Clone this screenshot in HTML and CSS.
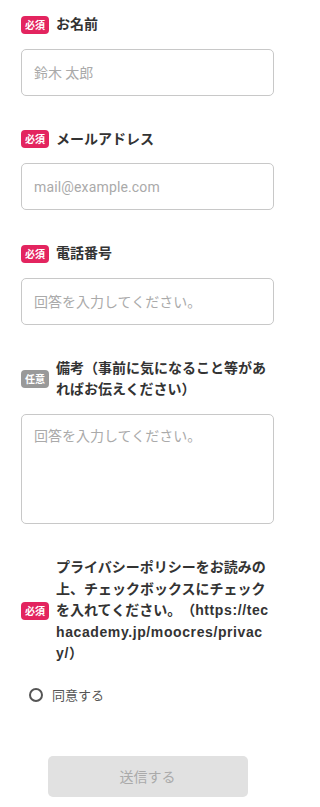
FILE: index.html
```html
<!DOCTYPE html>
<html lang="ja">
<head>
<meta charset="utf-8">
<title>Form</title>
<link rel="stylesheet" href="styles.css">
</head>
<body>
<form class="form">
  <div class="field">
    <div class="label-row">
      <span class="badge badge-req">必須</span>
      <span class="label">お名前</span>
    </div>
    <input class="input" type="text" placeholder="鈴木 太郎">
  </div>
  <div class="field">
    <div class="label-row">
      <span class="badge badge-req">必須</span>
      <span class="label">メールアドレス</span>
    </div>
    <input class="input input-latin" type="email" placeholder="mail@example.com">
  </div>
  <div class="field">
    <div class="label-row">
      <span class="badge badge-req">必須</span>
      <span class="label">電話番号</span>
    </div>
    <input class="input" type="tel" placeholder="回答を入力してください。">
  </div>
  <div class="field">
    <div class="label-row">
      <span class="badge badge-opt">任意</span>
      <span class="label">備考（事前に気になること等があればお伝えください）</span>
    </div>
    <textarea class="textarea" placeholder="回答を入力してください。"></textarea>
  </div>
  <div class="field field-privacy">
    <div class="label-row">
      <span class="badge badge-req">必須</span>
      <span class="label label-break">プライバシーポリシーをお読みの上、チェックボックスにチェックを入れてください。（<span class="url">https://techacademy.jp/moocres/privacy/</span>）</span>
    </div>
    <label class="radio-row">
      <input class="radio" type="radio" name="agree">
      <span class="radio-text">同意する</span>
    </label>
  </div>
  <div class="actions">
    <button class="submit" type="button" disabled>送信する</button>
  </div>
</form>
</body>
</html>
```
FILE: styles.css
```css
* { box-sizing: border-box; }
html, body { margin: 0; padding: 0; background: #fff; }
body {
  font-family: "Liberation Sans", "Noto Sans CJK JP", sans-serif;
  color: #333;
  width: 300px;
  text-spacing-trim: space-all;
}
.form {
  padding: 14px 26px 0 21px;
  display: flex;
  flex-direction: column;
}
.field { display: flex; flex-direction: column; }
.field + .field { margin-top: 33px; }
.label-row {
  display: flex;
  align-items: center;
  gap: 7px;
}
.badge {
  flex: none;
  width: 28px;
  height: 18px;
  border-radius: 4px;
  color: #fff;
  font-family: "Noto Sans CJK JP", sans-serif;
  font-size: 10px;
  font-weight: 700;
  line-height: 18px;
  text-align: center;
}
.badge-req { background: #e3245f; }
.badge-opt { background: #999; }
.label {
  flex: none;
  width: 214.5px;
  font-family: "Liberation Sans", "Noto Sans CJK JP", sans-serif;
  font-size: 14px;
  font-weight: 700;
  line-height: 21.6px;
  color: #333;
  text-spacing-trim: space-all;
}
.label-break { word-break: break-all; }
.url { letter-spacing: 0.6px; }
.input, .textarea {
  margin-top: 13px;
  width: 100%;
  border: 1px solid #c8c8c8;
  border-radius: 5px;
  font-family: "Noto Sans CJK JP", Roboto, sans-serif;
  font-size: 14px;
  color: #333;
  background: #fff;
  outline: none;
}
.input {
  height: 47px;
  padding: 0 12px;
}
.input-latin { font-family: Roboto, "Noto Sans CJK JP", sans-serif; letter-spacing: 0.15px; }
.textarea {
  height: 110px;
  padding: 10px 12px;
  resize: none;
  line-height: 20px;
  display: block;
}
.input::placeholder, .textarea::placeholder { color: #aaa; }
.radio-row {
  margin-top: 20px;
  margin-left: 8px;
  display: flex;
  align-items: center;
  gap: 9px;
  height: 20px;
}
.radio {
  appearance: none;
  -webkit-appearance: none;
  margin: 0;
  width: 14px;
  height: 14px;
  border: 2px solid #555;
  border-radius: 50%;
  background: #fff;
}
.radio-text {
  font-family: "Noto Sans CJK JP", sans-serif;
  font-size: 13px;
  color: #555;
}
.actions {
  margin-top: 51px;
  display: flex;
  justify-content: center;
}
.submit {
  width: 200px;
  height: 41px;
  border: none;
  border-radius: 5px;
  background: #e1e1e1;
  color: #aaa;
  font-family: "Noto Sans CJK JP", sans-serif;
  font-size: 14px;
}
```
